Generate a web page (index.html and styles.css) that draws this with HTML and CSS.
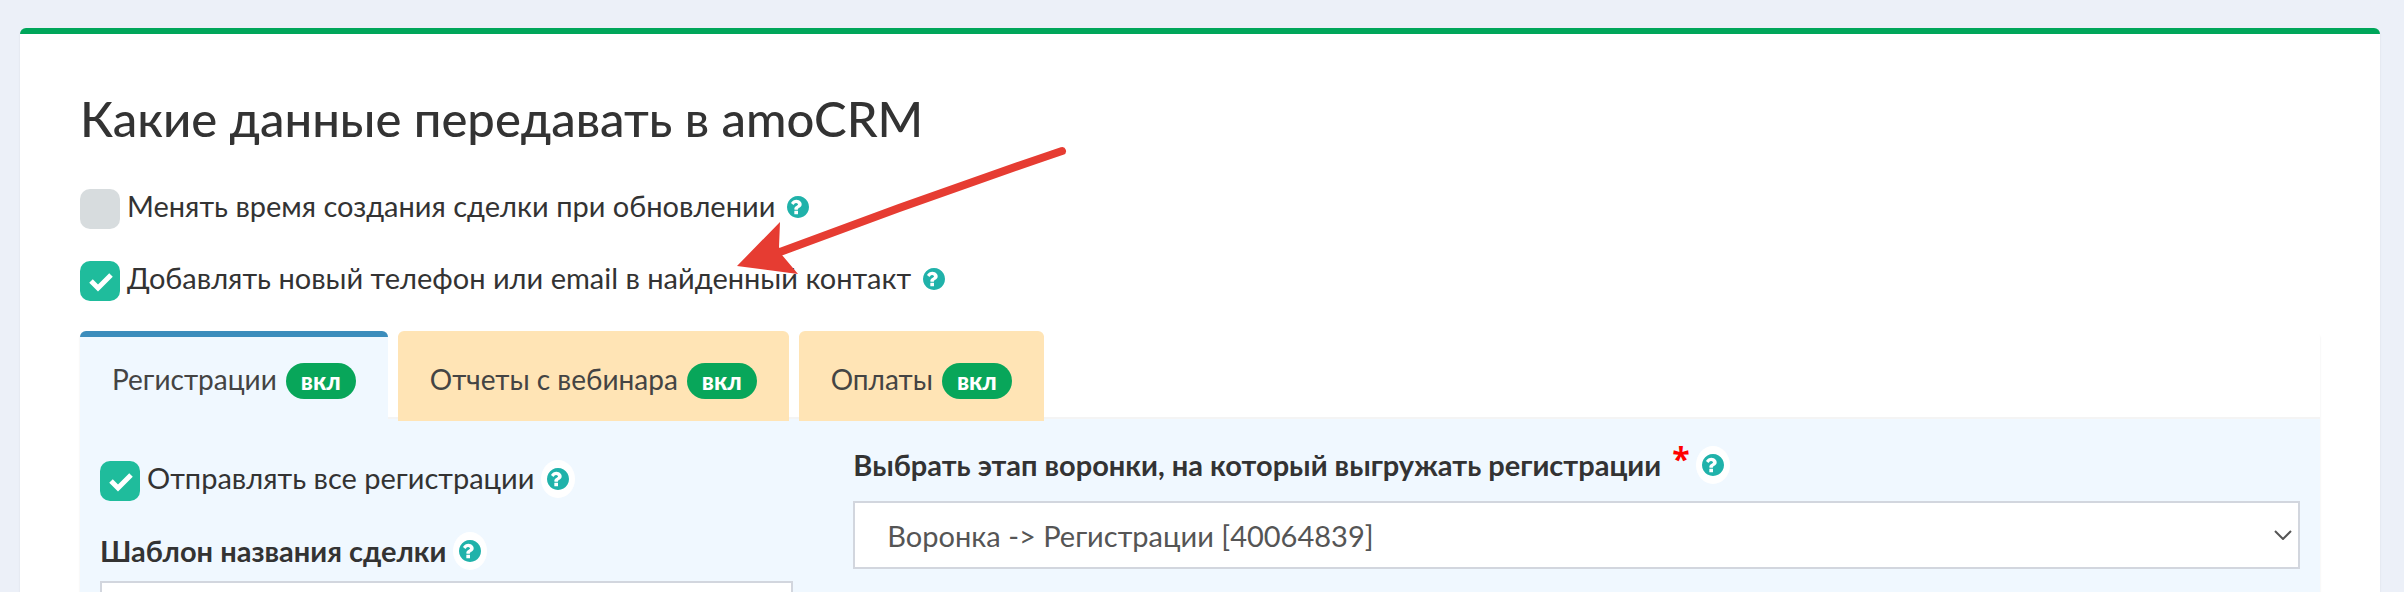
FILE: index.html
```
<!DOCTYPE html>
<html lang="ru">
<head>
    <meta charset="UTF-8">
    <meta name="viewport" content="width=device-width, initial-scale=1.0">
    <title>Какие данные передавать в amoCRM</title>
    <link rel="stylesheet" href="styles.css">
</head>
<body>
    <!-- Shared icons -->
    <svg class="sprite" aria-hidden="true">
        <symbol id="question" viewBox="128 128 1536 1536">
            <path d="M896 1376v-192q0-14-9-23t-23-9h-192q-14 0-23 9t-9 23v192q0 14 9 23t23 9h192q14 0 23-9t9-23zm256-672q0-88-55.500-163t-138.500-116-170-41q-243 0-371 213-15 24 8 42l132 100q7 6 19 6 16 0 25-12 53-68 86-92 34-24 86-24 48 0 85.500 26t37.500 59q0 38-20 61t-68 45q-63 28-115.500 86.500t-52.500 125.500v36q0 14 9 23t23 9h192q14 0 23-9t9-23q0-19 21.500-49.500t54.500-49.500q32-18 49-28.500t46-35 44.500-48 28-60.500 12.500-81zm512 192q0 209-103 385.500t-279.500 279.500-385.500 103-385.500-103-279.500-279.500-103-385.500 103-385.500 279.500-279.500 385.500-103 385.500 103 279.500 279.500 103 385.500z"/>
        </symbol>
        <symbol id="check" viewBox="0 0 40 40">
            <path d="M11 20l7 7 13-13" fill="none" stroke="#fff" stroke-width="5"/>
        </symbol>
    </svg>

    <section class="box">
        <h1>Какие данные передавать в amoCRM</h1>

        <div class="option">
            <label class="checkbox" for="change_time">
                <input type="checkbox" id="change_time" name="change_time">
                <svg class="tick"><use href="#check"/></svg>
                <span>Менять время создания сделки при обновлении</span>
            </label>
            <button type="button" class="help" aria-label="Подсказка"><svg><use href="#question"/></svg></button>
        </div>
        <div class="option">
            <label class="checkbox" for="add_contact">
                <input type="checkbox" id="add_contact" name="add_contact" checked>
                <svg class="tick"><use href="#check"/></svg>
                <span>Добавлять новый телефон или email в найденный контакт</span>
            </label>
            <button type="button" class="help" aria-label="Подсказка"><svg><use href="#question"/></svg></button>
        </div>

        <div class="tabs-box">
            <nav class="tabs">
                <a href="#registrations" class="tab active">Регистрации <span class="badge">вкл</span></a>
                <a href="#reports" class="tab">Отчеты с вебинара <span class="badge">вкл</span></a>
                <a href="#payments" class="tab">Оплаты <span class="badge">вкл</span></a>
            </nav>

            <form class="tab-content" id="registrations">
                <div class="col-left">
                    <div class="option">
                        <label class="checkbox" for="send_all">
                            <input type="checkbox" id="send_all" name="send_all" checked>
                            <svg class="tick"><use href="#check"/></svg>
                            <span>Отправлять все регистрации</span>
                        </label>
                        <button type="button" class="help" aria-label="Подсказка"><svg><use href="#question"/></svg></button>
                    </div>
                    <div class="field-title">
                        <label for="lead_name">Шаблон названия сделки</label>
                        <button type="button" class="help" aria-label="Подсказка"><svg><use href="#question"/></svg></button>
                    </div>
                    <input type="text" class="form-control" id="lead_name" name="lead_name">
                </div>
                <div class="col-right">
                    <div class="field-title">
                        <label for="stage">Выбрать этап воронки, на который выгружать регистрации <span class="required">*</span></label>
                        <button type="button" class="help" aria-label="Подсказка"><svg><use href="#question"/></svg></button>
                    </div>
                    <div class="select">
                        <select class="form-control" id="stage" name="stage">
                            <option>Воронка -&gt; Регистрации [40064839]</option>
                        </select>
                        <svg class="chevron" viewBox="0 0 18 10"><path d="M1 1l8 8 8-8" fill="none" stroke="#555" stroke-width="2"/></svg>
                    </div>
                </div>
            </form>
        </div>

        <!-- Arrow pointing at the contact option -->
        <svg class="arrow" viewBox="0 0 332 130" aria-hidden="true">
            <path d="M43 106Q184 53 325 5" fill="none" stroke="#e63c32" stroke-width="8" stroke-linecap="round"/>
            <path d="M0 120L43 76 42 101 45 109 61 128z" fill="#e63c32"/>
        </svg>
    </section>
</body>
</html>
```
FILE: styles.css
```
* {
    box-sizing: border-box;
}
body {
    margin: 0;
    padding: 28px 24px 0 20px;
    background-color: #ecf0f8;
    color: #333;
    font-family: Lato, "Open Sans", sans-serif;
    font-size: 29px;
    line-height: 40px;
}
.sprite {
    display: none;
}
.box {
    position: relative;
    padding: 52px 60px 60px;
    background-color: #fff;
    border-top: 6px solid #00a65a;
    border-radius: 6px;
    box-shadow: 0 2px 2px rgba(0, 0, 0, 0.1);
}
h1 {
    margin: 0 0 39px;
    font-size: 49px;
    font-weight: 500;
    line-height: 64px;
}
.option {
    display: flex;
    align-items: center;
}
.option + .option {
    margin-top: 32px;
}
.checkbox {
    position: relative;
    display: flex;
    gap: 7px;
    cursor: pointer;
}
.checkbox span {
    margin-top: -3px;
}
.checkbox input {
    appearance: none;
    width: 40px;
    height: 40px;
    margin: 0;
    background-color: #d7dcde;
    border-radius: 10px;
}
.checkbox input:checked {
    background-color: #1fbc9c;
}
.tick {
    display: none;
    position: absolute;
    left: 0;
    top: 0;
    width: 40px;
    height: 40px;
}
.checkbox input:checked + .tick {
    display: block;
}
.help {
    display: flex;
    align-items: center;
    justify-content: center;
    width: 34px;
    height: 38px;
    margin-left: 6px;
    padding: 0;
    border: none;
    border-radius: 50%;
    background-color: #fff;
    cursor: pointer;
}
.option .help {
    margin-top: -4px;
}
.help svg {
    width: 22px;
    height: 22px;
    fill: #20b2aa;
}
.tabs-box {
    margin-top: 30px;
    border-radius: 6px;
    box-shadow: 0 2px 2px rgba(0, 0, 0, 0.1);
}
.tabs {
    display: flex;
    gap: 10px;
    border-bottom: 2px solid #f4f4f4;
}
.tab {
    display: flex;
    align-items: center;
    gap: 9px;
    height: 90px;
    margin-bottom: -4px;
    padding: 0 32px;
    background-color: #ffe4b5;
    border-top: 6px solid #ffe4b5;
    border-radius: 6px 6px 0 0;
    color: #444;
    font-size: 28px;
    text-decoration: none;
    z-index: 1;
}
.tab.active {
    background-color: #f0f8ff;
    border-top-color: #3c8dbc;
}
.badge {
    height: 36px;
    margin-top: 4px;
    padding: 0 15px;
    background-color: #08a65a;
    border-radius: 20px;
    color: #fff;
    font-size: 24px;
    font-weight: 900;
    line-height: 36px;
}
.tab-content {
    display: grid;
    grid-template-columns: repeat(12, 1fr);
    column-gap: 60px;
    padding: 26px 20px 40px;
    background-color: #f0f8ff;
}
.col-left {
    grid-column: span 4;
    padding-top: 16px;
}
.col-right {
    grid-column: span 8;
}
.field-title {
    display: flex;
    align-items: center;
    height: 40px;
    font-weight: 700;
}
.col-left .field-title {
    margin: 30px 0 10px;
}
.col-right .field-title {
    margin-bottom: 16px;
}
.required {
    margin-left: 4px;
    color: red;
    font-family: "Open Sans", sans-serif;
    font-size: 32px;
    line-height: 0;
    vertical-align: 5px;
}
.form-control {
    display: block;
    width: 100%;
    height: 68px;
    padding: 0 32px;
    background-color: #fff;
    border: 2px solid #d2d6de;
    border-radius: 0;
    color: #555;
    font-family: inherit;
    font-size: 29px;
}
.select {
    position: relative;
}
.select select {
    appearance: none;
}
.chevron {
    position: absolute;
    right: 8px;
    top: 29px;
    width: 18px;
    height: 10px;
    pointer-events: none;
}
.arrow {
    position: absolute;
    left: 717px;
    top: 112px;
    width: 332px;
    height: 130px;
    pointer-events: none;
    z-index: 2;
}
```
